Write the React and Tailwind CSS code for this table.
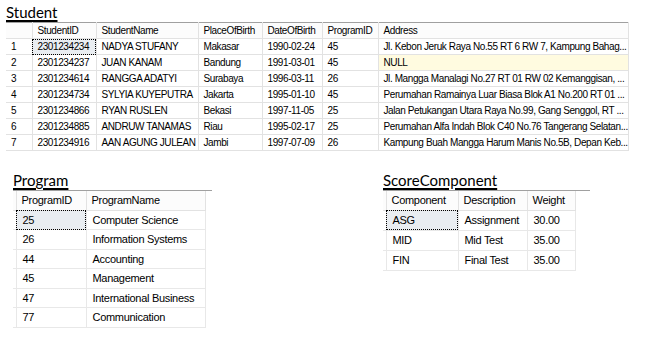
const students = [
  ["1", "2301234234", "NADYA STUFANY", "Makasar", "1990-02-24", "45", "Jl. Kebon Jeruk Raya No.55 RT 6 RW 7, Kampung Bahag..."],
  ["2", "2301234237", "JUAN KANAM", "Bandung", "1991-03-01", "45", "NULL"],
  ["3", "2301234614", "RANGGA ADATYI", "Surabaya", "1996-03-11", "26", "Jl. Mangga Manalagi No.27 RT 01 RW 02 Kemanggisan, ..."],
  ["4", "2301234734", "SYLYIA KUYEPUTRA", "Jakarta", "1995-01-10", "45", "Perumahan Ramainya Luar Biasa Blok A1 No.200 RT 01 ..."],
  ["5", "2301234866", "RYAN RUSLEN", "Bekasi", "1997-11-05", "25", "Jalan Petukangan Utara Raya No.99, Gang Senggol, RT ..."],
  ["6", "2301234885", "ANDRUW TANAMAS", "Riau", "1995-02-17", "25", "Perumahan Alfa Indah Blok C40 No.76 Tangerang Selatan..."],
  ["7", "2301234916", "AAN AGUNG JULEAN", "Jambi", "1997-07-09", "26", "Kampung Buah Mangga Harum Manis No.5B, Depan Keb..."],
];

const programs = [
  ["25", "Computer Science"],
  ["26", "Information Systems"],
  ["44", "Accounting"],
  ["45", "Management"],
  ["47", "International Business"],
  ["77", "Communication"],
];

const scores = [
  ["ASG", "Assignment", "30.00"],
  ["MID", "Mid Test", "35.00"],
  ["FIN", "Final Test", "35.00"],
];

const gridFont = { fontFamily: '"Liberation Sans", Arial, sans-serif' };

function Title({ children }) {
  return (
    <h2 className="text-[15px] leading-[20px] text-black underline underline-offset-[2px] decoration-[1.5px] font-['Lato',sans-serif]">
      {children}
    </h2>
  );
}

function StudentGrid() {
  const widths = [26, 64, 102, 64, 60, 56, 250];
  const heads = ["", "StudentID", "StudentName", "PlaceOfBirth", "DateOfBirth", "ProgramID", "Address"];

  return (
    <table className="table-fixed border-collapse w-[622px] text-[10px] tracking-[-0.4px] text-black" style={gridFont}>
      <colgroup>
        {widths.map((w, i) => (
          <col key={i} className={`w-[${w}px]`} style={{ width: w }} />
        ))}
      </colgroup>
      <thead>
        <tr className="h-[16px]">
          {heads.map((h, i) => (
            <th
              key={i}
              className="font-normal text-left pl-[5px] border-t border-t-[#a0a0a0] border-r border-b border-[#e2e2e2] bg-[#fcfcfc] whitespace-nowrap overflow-hidden"
            >
              {h}
            </th>
          ))}
        </tr>
      </thead>
      <tbody>
        {students.map((row, r) => (
          <tr key={r} className="h-[16px]">
            {row.map((cell, c) => {
              const focused = r === 0 && c === 1;
              const isNull = cell === "NULL";
              return (
                <td
                  key={c}
                  className={
                    "p-0 pl-[5px] border-r border-b border-[#e2e2e2] whitespace-nowrap overflow-hidden " +
                    (focused ? "bg-[#e9edf1] outline-1 outline-dotted outline-black -outline-offset-1 " : "") +
                    (isNull ? "bg-[#fffbe0] " : "")
                  }
                >
                  {cell}
                </td>
              );
            })}
          </tr>
        ))}
      </tbody>
    </table>
  );
}

function SmallGrid({ heads, widths, rows, frameWidth, headH, rowH }) {
  const tableWidth = widths.reduce((a, b) => a + b, 0);
  return (
    <div className="border-t border-[#a0a0a0]" style={{ width: frameWidth }}>
      <table
        className="table-fixed border-collapse text-[11px] tracking-[-0.3px] text-black"
        style={{ ...gridFont, width: tableWidth }}
      >
        <colgroup>
          {widths.map((w, i) => (
            <col key={i} style={{ width: w }} />
          ))}
        </colgroup>
        <thead>
          <tr style={{ height: headH }}>
            {heads.map((h, i) => (
              <th
                key={i}
                className="p-0 font-normal text-left pl-[5px] border-r border-b border-[#e2e2e2] bg-[#fcfcfc] whitespace-nowrap overflow-hidden"
              >
                {h}
              </th>
            ))}
          </tr>
        </thead>
        <tbody>
          {rows.map((row, r) => (
            <tr key={r} style={{ height: rowH }}>
              {["", ...row].map((cell, c) => {
                const focused = r === 0 && c === 1;
                return (
                  <td
                    key={c}
                    className={
                      "p-0 pl-[6px] border-r border-b border-[#e8e8e8] whitespace-nowrap overflow-hidden " +
                      (focused ? "bg-[#e9edf1] outline-1 outline-dotted outline-black -outline-offset-1" : "")
                    }
                  >
                    {cell}
                  </td>
                );
              })}
            </tr>
          ))}
        </tbody>
      </table>
    </div>
  );
}

export default function App() {
  return (
    <div className="w-[648px] h-[337px] bg-white overflow-hidden">
      {/* student table */}
      <div className="pl-[6px] pt-[2px]">
        <Title>Student</Title>
        <StudentGrid />
      </div>

      <div className="flex mt-[19px]">
        {/* program */}
        <div className="pl-[13px]">
          <Title>Program</Title>
          <SmallGrid
            heads={["", "ProgramID", "ProgramName"]}
            widths={[3, 70, 119]}
            rows={programs}
            frameWidth={199}
            headH={19}
            rowH={19.5}
          />
        </div>

        {/* score component */}
        <div className="ml-[171px]">
          <Title>ScoreComponent</Title>
          <SmallGrid
            heads={["", "Component", "Description", "Weight"]}
            widths={[3, 72, 69, 48]}
            rows={scores}
            frameWidth={207}
            headH={19}
            rowH={20}
          />
        </div>
      </div>
    </div>
  );
}
